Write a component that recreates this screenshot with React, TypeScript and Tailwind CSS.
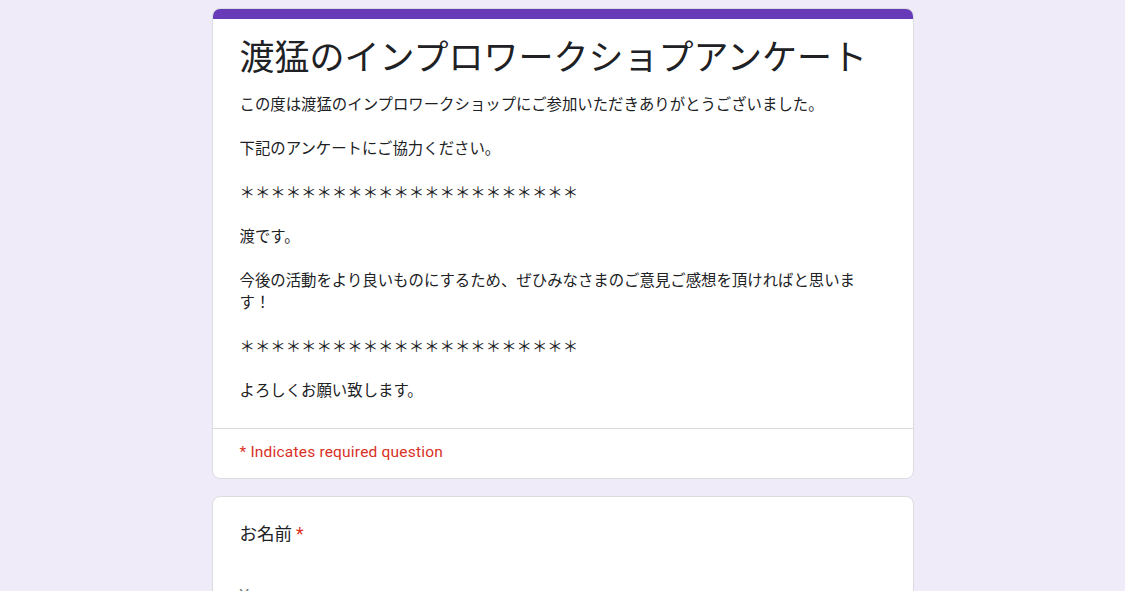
import React from 'react';

const FONT = { fontFamily: 'Roboto, "Noto Sans CJK JP", sans-serif' };

const stars = '＊＊＊＊＊＊＊＊＊＊＊＊＊＊＊＊＊＊＊＊＊＊';

const description = [
  'この度は渡猛のインプロワークショップにご参加いただきありがとうございました。',
  '',
  '下記のアンケートにご協力ください。',
  '',
  stars,
  '',
  '渡です。',
  '',
  '今後の活動をより良いものにするため、ぜひみなさまのご意見ご感想を頂ければと思います！',
  '',
  stars,
  '',
  'よろしくお願い致します。',
].join('\n');

function HeaderCard() {
  return (
    <div className="w-[702px] mx-auto bg-white rounded-lg border border-[#dadce0] overflow-hidden">
      <div className="h-[10px] bg-[#673ab7]" />
      <div className="pl-[27px] pr-[32px] pt-[18px] pb-[26px]">
        <h1 className="text-[35px] leading-[44px] text-[#202124] font-normal">
          渡猛のインプロワークショプアンケート
        </h1>
        <div className="mt-[13px] text-[15.4px] leading-[22px] text-[#202124] whitespace-pre-wrap">
          {description}
        </div>
      </div>
      <div className="border-t border-[#dadce0] pl-[27px] pt-[11px] pb-[14px]">
        <span className="text-[15.5px] leading-[22px] tracking-[0.2px] text-[#d93025]">
          * Indicates required question
        </span>
      </div>
    </div>
  );
}

function QuestionCard() {
  return (
    <div className="w-[702px] mx-auto mt-[17px] bg-white rounded-lg border border-[#dadce0] pl-[27px] pr-[27px] pt-[24px] pb-[24px]">
      <div className="text-[17.5px] leading-[26px] text-[#202124]">
        お名前<span className="ml-[4px] text-[#d93025]">*</span>
      </div>
      <div className="mt-[37px] text-[15.5px] leading-[22px] text-[#70757a] border-b border-[#dadce0] w-[320px] pb-[6px]">
        Your answer
      </div>
    </div>
  );
}

export default function App() {
  return (
    <div className="min-h-screen bg-[#f0ebf8] pt-[8px] pb-[24px]" style={FONT}>
      <HeaderCard />
      <QuestionCard />
    </div>
  );
}
